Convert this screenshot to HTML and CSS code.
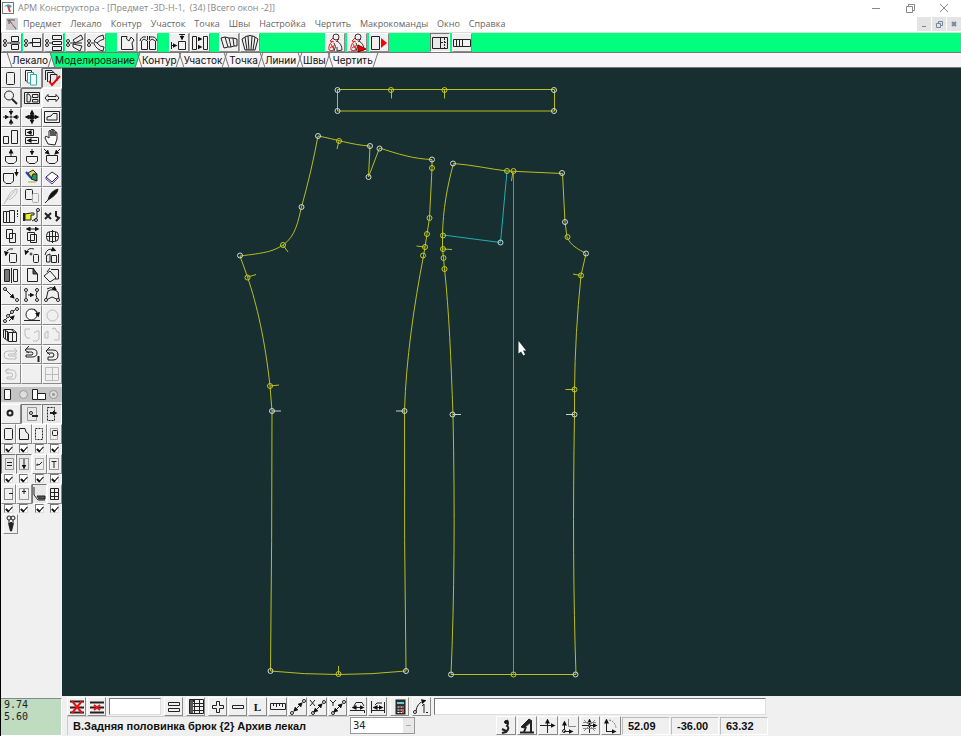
FILE: index.html
```html
<!DOCTYPE html>
<html lang="ru">
<head>
<meta charset="utf-8">
<title>АРМ Конструктора</title>
<link rel="stylesheet" href="styles.css">
</head>
<body>
<svg class="defs" aria-hidden="true">
  <defs>
    <marker id="a" viewBox="0 0 6 6" refX="3" refY="3" markerWidth="5" markerHeight="5" markerUnits="userSpaceOnUse" orient="auto-start-reverse"><path d="M0 0L6 3L0 6Z" fill="#111" stroke="none"/></marker>
    <symbol id="man" viewBox="0 0 20 20"><circle cx="11" cy="4" r="3" stroke="#333"/><path d="M8 5L5 8L9 9M14 6L11 9" stroke="#d22"/><path d="M8 8Q3 11 4 17L8 18L9 12M6 11L8 15M5 15L8 13" stroke="#d22"/><path d="M12 8Q17 11 17 17L12 18L12 14M9 10Q12 13 9 18" stroke="#333"/></symbol>
    <symbol id="mach" viewBox="0 0 20 20"><circle cx="3" cy="8" r="1.5"/><circle cx="3" cy="12" r="1.5"/><path d="M5 10H9"/></symbol>
  </defs>
</svg>
<div class="window">
  <header class="titlebar">
    <svg class="app" viewBox="0 0 12 12"><rect x=".5" y=".5" width="11" height="11" fill="#fff" stroke="#777"/><path d="M2 5Q5 0 10 4L8 6Q6 3 2 5" fill="#39a7bd" stroke="none"/><path d="M6 4L8 10" stroke="#c44" stroke-width="2"/></svg>
    <h1>АРМ Конструктора - [Предмет -3D-H-1,&nbsp; (34) [Всего окон -2]]</h1>
    <div class="wincontrols">
      <button aria-label="Свернуть"><svg viewBox="0 0 10 10"><path d="M1 5.500H9"/></svg></button>
      <button aria-label="Восстановить"><svg viewBox="0 0 10 10"><path d="M1.500 3.500H7.500V9.500H1.500ZM3.500 3V1.500H9.500V7.500H8"/></svg></button>
      <button aria-label="Закрыть"><svg viewBox="0 0 10 10"><path d="M1 1L9 9M9 1L1 9"/></svg></button>
    </div>
  </header>
  <nav class="menubar">
    <svg class="doc" viewBox="0 0 12 12"><rect width="12" height="12" fill="#ccc" stroke="none"/><path d="M1 2H9M3 2L10 11M3 2V6" stroke="#555"/><path d="M4 4L8 8" stroke="#b66"/></svg>
    <button>Предмет</button><button>Лекало</button><button>Контур</button><button>Участок</button><button>Точка</button><button>Швы</button><button>Настройка</button><button>Чертить</button><button>Макрокоманды</button><button>Окно</button><button>Справка</button>
    <div class="mdi">
      <button aria-label="Свернуть окно"><svg viewBox="0 0 10 10"><path d="M3 7.500H7"/></svg></button>
      <button aria-label="Восстановить окно"><svg viewBox="0 0 10 10"><path d="M2.500 4.500H6.500V8.500H2.500ZM4.500 4V2.500H8.500V6.500H7"/></svg></button>
      <button aria-label="Закрыть окно"><svg viewBox="0 0 10 10"><path d="M3 3L7 7M7 3L3 7" stroke-width="2"/></svg></button>
    </div>
  </nav>
  <div class="toolbar">
    <div class="group">
      <button aria-label="Шов 1"><svg viewBox="0 0 20 20"><use href="#mach"/><path d="M9.500 3.500H16.500V8.500H9.500ZM9.500 11.500H16.500V16.500H9.500Z"/><path d="M8 10H18"/></svg></button>
      <button aria-label="Шов 2"><svg viewBox="0 0 20 20"><use href="#mach"/><path d="M9.500 5.500H17.500V13.500H9.500Z"/><path d="M7 9.500H18"/></svg></button>
      <button aria-label="Шов 3"><svg viewBox="0 0 20 20"><use href="#mach"/><path d="M8.500 2.500H17.500V6.500H8.500ZM8.500 8.500H17.500V11.500H8.500ZM8.500 13.500H17.500V17.500H8.500Z"/></svg></button>
      <button aria-label="Шов 4"><svg viewBox="0 0 20 20"><use href="#mach"/><path d="M8 7L16 2L18 6L10 10ZM8 11L17 13L15 18L8 14ZM8 10H17"/></svg></button>
      <button aria-label="Шов 5"><svg viewBox="0 0 20 20"><use href="#mach"/><path d="M8 8Q11 3 17 2L18 6Q14 7 11 10ZM8 11Q11 17 17 18L18 14Q14 14 11 10"/></svg></button>
    </div>
    <div class="group g2">
      <button aria-label="Вырез"><svg viewBox="0 0 20 20"><path d="M4.500 3.500H10L9.500 6L12 8L14 4L17 7L15 10L16 16.500H4.500Z"/></svg></button>
      <button aria-label="Складки"><svg viewBox="0 0 20 20"><path d="M3.500 16.500V8L6 6L9.500 8V16.500ZM11.500 16.500V8L14 6L17.500 8V16.500ZM2 8Q3 3 8 4M19 8Q18 3 12 4"/><path d="M9.500 7V3M11.500 7V3"/></svg></button>
    </div>
    <div class="group g3">
      <button aria-label="Сдвиг"><svg viewBox="0 0 20 20"><path d="M2.500 9V16M9.500 8.500H16.500V16.500H9.500ZM10 1.500H16"/><path d="M3 12.500H6" marker-end="url(#a)"/><path d="M13 2V5" marker-end="url(#a)"/></svg></button>
      <button aria-label="Раздвижка"><svg viewBox="0 0 20 20"><path d="M2.500 3.500H6.500V16.500H2.500ZM13.500 3.500H17.500V16.500H13.500Z"/><path d="M8 6H10" marker-end="url(#a)"/><path d="M8 14H10" marker-end="url(#a)"/></svg></button>
    </div>
    <div class="group g4">
      <button aria-label="Веер"><svg viewBox="0 0 20 20"><path d="M2 5L6 4L9 14L5 15ZM6 4L10 5L12 14L9 14M10 5L14 5L15 13L12 14M14 5L18 6V13H15"/></svg></button>
      <button aria-label="Расширение"><svg viewBox="0 0 20 20"><path d="M2 6Q10 -1 18 6L15 17H5ZM5 4L7 17M8 3L9 17M12 3L11 17M15 4L13 17"/></svg></button>
    </div>
    <div class="group g5">
      <button aria-label="Манекен"><svg viewBox="0 0 20 20"><use href="#man"/></svg></button>
      <button aria-label="Манекен далее"><svg viewBox="0 0 20 20"><use href="#man"/><path d="M11 12L19 16L11 19Z" fill="#e00" stroke="#800"/></svg></button>
      <button aria-label="Вывод"><svg viewBox="0 0 20 20"><path d="M2.500 3.500H10.500V16.500H2.500Z"/><path d="M12 5L18 10L12 15Z" fill="#f00" stroke="none"/></svg></button>
    </div>
    <div class="group g6">
      <button class="down" aria-label="Раскладка"><svg viewBox="0 0 20 20"><path d="M2.500 4.500H17.500V15.500H2.500ZM10.500 5V15"/><path d="M14.500 5V15M11 9.500H17" stroke-dasharray="2 1"/></svg></button>
      <button aria-label="Линейка"><svg viewBox="0 0 20 20"><path d="M1.500 6.500H18.500V13.500H1.500ZM4.500 7V13M7.500 7V13M10.500 7V13"/></svg></button>
    </div>
  </div>
  <div class="tabs" role="tablist">
    <button role="tab">Лекало</button><button role="tab" class="active" aria-selected="true">Моделирование</button><button role="tab">Контур</button><button role="tab">Участок</button><button role="tab">Точка</button><button role="tab">Линии</button><button role="tab">Швы</button><button role="tab">Чертить</button>
  </div>
  <main class="work">
    <aside class="side">
      <div class="tools">
        <button aria-label="Деталь"><svg viewBox="0 0 20 20"><rect x="5.500" y="4.500" width="8" height="12" rx="1"/></svg></button>
        <button aria-label="Детали"><svg viewBox="0 0 20 20"><g fill="#fff"><path d="M3.500 2.500H9.500V13H3.500Z"/><path d="M5.500 4.500H11.500V15H5.500Z" stroke="#299"/><path d="M8.500 6.500H14.500V17H8.500Z" stroke="#3aa"/></g></svg></button>
        <button class="down" aria-label="Выбор"><svg viewBox="0 0 20 20"><path d="M3.500 12V2.500H10L12 5M5.500 14V4.500H12L14 7M8.500 6.500H15V13M8.500 6.500V15"/><path d="M7 13L10 17L18 8" stroke="#e00" stroke-width="2"/></svg></button>

        <button aria-label="Лупа"><svg viewBox="0 0 20 20"><circle cx="8" cy="7.500" r="4.500"/><path d="M11 11L16 16" stroke-width="2"/></svg></button>
        <button class="down" aria-label="Окно"><svg viewBox="0 0 20 20"><path d="M2.500 4.500H17.500V15.500H2.500ZM5 6V14H8L9 9L7 6ZM10.500 6.500H16V9.500H10.500ZM10.500 11.500H16V14H10.500Z"/></svg></button>
        <button aria-label="Ширина"><svg viewBox="0 0 20 20"><path d="M3 10L6 6.500V8.500H14V6.500L17 10L14 13.500V11.500H6V13.500Z"/></svg></button>

        <button aria-label="Сжать"><svg viewBox="0 0 20 20"><path d="M2 10H6" marker-end="url(#a)"/><path d="M18 10H14" marker-end="url(#a)"/><path d="M10 2V6" marker-end="url(#a)"/><path d="M10 18V14" marker-end="url(#a)"/><circle cx="10" cy="10" r="1"/></svg></button>
        <button aria-label="Переместить"><svg viewBox="0 0 20 20"><circle cx="10" cy="10" r="2.500" fill="#111"/><path d="M10 6V5" marker-end="url(#a)"/><path d="M10 14V15" marker-end="url(#a)"/><path d="M6 10H5" marker-end="url(#a)"/><path d="M14 10H15" marker-end="url(#a)"/></svg></button>
        <button aria-label="Форма"><svg viewBox="0 0 20 20"><path d="M2.500 4.500H17.500V15.500H2.500ZM5 13V10L9 9L11 6.500H15V13Z"/></svg></button>

        <button aria-label="Размер"><svg viewBox="0 0 20 20"><path d="M2.500 9.500H7.500V16.500H2.500ZM10.500 3.500H16.500V16.500H10.500Z"/></svg></button>
        <button aria-label="Строки"><svg viewBox="0 0 20 20"><path d="M3.500 2.500H11.500V8.500H3.500ZM3.500 10.500H16.500V16.500H3.500Z"/><path d="M10 5.500H7" marker-end="url(#a)"/><path d="M15 13.500H7" marker-end="url(#a)"/></svg></button>
        <button aria-label="Рука"><svg viewBox="0 0 20 20"><path d="M6 17L3 11L4 9L7 11V4Q8 3 9 4V9V3Q10 1 11 3V9V3Q12 2 13 4V9V5Q15 4 15 7V12L13 18Z" fill="#fff"/></svg></button>

        <button aria-label="Поднять"><svg viewBox="0 0 20 20"><path d="M4.500 9.500H15.500V14L13 16.500H7L4.500 14Z"/><path d="M10 9V4" marker-end="url(#a)"/></svg></button>
        <button aria-label="Опустить"><svg viewBox="0 0 20 20"><path d="M4.500 9.500H15.500V14L13 16.500H7L4.500 14Z"/><path d="M10 2V6" marker-end="url(#a)"/></svg></button>
        <button aria-label="Собрать"><svg viewBox="0 0 20 20"><path d="M4.500 8.500H15.500V14L13 16.500H7L4.500 14Z"/><path d="M2 2L6 6" marker-end="url(#a)"/><path d="M18 2L14 6" marker-end="url(#a)"/></svg></button>

        <button aria-label="Вниз"><svg viewBox="0 0 20 20"><path d="M2.500 6.500H12.500V14L10 16.500H5L2.500 14Z"/><path d="M15.500 2V7" marker-end="url(#a)"/></svg></button>
        <button aria-label="Заливка"><svg viewBox="0 0 20 20"><path d="M6 6L11 3L15 7L10 12Z" fill="#e9d84a"/><path d="M4 5L9 11" stroke="#24a" stroke-width="2"/><path d="M11 7H15V14L9 12Z" fill="#296"/><path d="M6 15H14" stroke="#aa3"/></svg></button>
        <button aria-label="Ластик"><svg viewBox="0 0 20 20"><path d="M4 10L10 5L16 9L10 15Z" fill="#fff" stroke="#224"/><path d="M4 10V12L10 17L16 11V9" stroke="#63a"/></svg></button>

        <button class="off" aria-label="Перо серое"><svg viewBox="0 0 20 20"><path d="M3 18L7 11Q10 4 16 3Q17 9 8 14M5 15L14 5"/></svg></button>
        <button aria-label="Копия"><svg viewBox="0 0 20 20"><rect x="3.500" y="3.500" width="7" height="10" rx="1"/><rect x="10.500" y="7.500" width="6" height="9" rx="1" stroke="#aaa"/></svg></button>
        <button aria-label="Перо"><svg viewBox="0 0 20 20"><path d="M6 14Q8 5 16 3Q16 8 6 14Z" fill="#111"/><path d="M3 17L8 12"/></svg></button>

        <button aria-label="Слои"><svg viewBox="0 0 20 20"><path d="M2.500 5.500H5.500V16.500H2.500ZM5.500 5.500H8.500V16.500H5.500ZM8.500 4.500H13.500V16.500H8.500Z"/><path d="M16.500 4V11" stroke-dasharray="2 1"/></svg></button>
        <button aria-label="Указать"><svg viewBox="0 0 20 20"><path d="M3 8L9 7H12V9H9V14H3Z" fill="#ee3"/><path d="M2 7V15" stroke-width="2"/><path d="M10 15L15 12V5"/><circle cx="16" cy="4" r="1.500"/><circle cx="14" cy="14" r="1.500"/></svg></button>
        <button aria-label="Точки"><svg viewBox="0 0 20 20"><path d="M3 7L9 13M9 7L3 13" stroke-width="2"/><path d="M14 5V10L17 12L14 15" stroke-width="2"/></svg></button>

        <button aria-label="Пара"><svg viewBox="0 0 20 20"><path d="M5.500 3.500H11.500V12.500H5.500ZM8.500 7.500H14.500V16.500H8.500Z"/></svg></button>
        <button aria-label="Растянуть"><svg viewBox="0 0 20 20"><path d="M6 3H15" marker-start="url(#a)" marker-end="url(#a)"/><path d="M5.500 6.500H12.500V14.500H5.500ZM8.500 8.500H14.500V16.500H8.500Z"/></svg></button>
        <button aria-label="Сетка"><svg viewBox="0 0 20 20"><rect x="4.500" y="5.500" width="12" height="10" rx="4"/><path d="M10.500 4V17M5 10.500H16M7.500 6V15M13.500 6V15"/></svg></button>

        <button aria-label="Поворот влево"><svg viewBox="0 0 20 20"><rect x="8.500" y="7.500" width="7" height="9" rx="1"/><path d="M12 3Q6 2 5 8" marker-end="url(#a)"/></svg></button>
        <button aria-label="Поворот точки"><svg viewBox="0 0 20 20"><rect x="11.500" y="8.500" width="5" height="8" rx="1"/><circle cx="9" cy="8" r="1"/><path d="M12 3Q6 1 4 7" marker-end="url(#a)"/></svg></button>
        <button aria-label="Поворот детали"><svg viewBox="0 0 20 20"><path d="M4.500 9.500L8 8V16H4.500ZM9.500 9.500H14.500V16.500H9.500ZM16.500 8V17"/><path d="M3 9Q5 1 12 4" marker-end="url(#a)"/></svg></button>

        <button aria-label="Зеркало"><svg viewBox="0 0 20 20"><path d="M3.500 4.500H8.500V16.500H3.500Z" fill="#777"/><path d="M12.500 4.500H16.500V16.500H12.500ZM10.500 3V18"/></svg></button>
        <button aria-label="Загнуть"><svg viewBox="0 0 20 20"><path d="M5.500 3.500H11L15.500 9V16.500H5.500Z"/><path d="M11 3V9H15Z" fill="#555"/></svg></button>
        <button aria-label="Наклон"><svg viewBox="0 0 20 20"><path d="M2 11L8 6L14 13L8 17Z"/><path d="M9 4.500H16.500V14H13M8 3L5 7"/></svg></button>

        <button aria-label="Отрезок"><svg viewBox="0 0 20 20"><circle cx="4" cy="4" r="1.500"/><circle cx="16" cy="15" r="1.500"/><path d="M5 5L12 12" marker-end="url(#a)"/></svg></button>
        <button aria-label="Узлы"><svg viewBox="0 0 20 20"><circle cx="4" cy="5" r="1.500"/><circle cx="4" cy="15" r="1.500"/><circle cx="15" cy="5" r="1.500"/><circle cx="15" cy="15" r="1.500"/><path d="M4 7V13M15 7L14 10L15 13"/><path d="M6 10H10" marker-end="url(#a)"/></svg></button>
        <button aria-label="Контур узлов"><svg viewBox="0 0 20 20"><path d="M4 15L6 6Q11 3 16 7L17 15L10 12Z"/><circle cx="4" cy="15" r="1.500" fill="#fff"/><circle cx="16" cy="15" r="1.500" fill="#fff"/><path d="M5 4Q9 1 13 4" marker-end="url(#a)"/></svg></button>

        <button aria-label="Кривая"><svg viewBox="0 0 20 20"><circle cx="4" cy="16" r="1.500"/><circle cx="7" cy="11" r="1.500"/><circle cx="11" cy="7" r="1.500"/><circle cx="16" cy="4" r="1.500"/><path d="M5 14L6 13M8 10L10 8M12 6L14 5"/><path d="M8 16L12 12" marker-end="url(#a)"/></svg></button>
        <button aria-label="Круг"><svg viewBox="0 0 20 20"><circle cx="9.500" cy="9.500" r="5.500" fill="#fff"/><path d="M2 15.500H18"/><path d="M12 4Q15 5 16 10" marker-end="url(#a)"/></svg></button>
        <button class="off" aria-label="Окружность"><svg viewBox="0 0 20 20"><circle cx="10.500" cy="10.500" r="5.500"/></svg></button>

        <button aria-label="Пачка"><svg viewBox="0 0 20 20"><path d="M2.500 4.500H12L15.500 7.500V16.500H7.500L2.500 12.500ZM4.500 5V14M6.500 6V15M7.500 7.500V16M7.500 7.500H15M3 4.500L7.500 7.500M10.500 5L13 7M11.500 8V16"/></svg></button>
        <button class="off" aria-label="Половины"><svg viewBox="0 0 20 20"><path d="M8 4H3V10L5 13H8M12 8L15 6H17V14L15 16H11"/></svg></button>
        <button class="off" aria-label="Части"><svg viewBox="0 0 20 20"><path d="M3 8L6 6V13H3ZM10 4L13 3L15 7H17V15H12"/></svg></button>

        <button class="off" aria-label="Вперёд"><svg viewBox="0 0 20 20"><path d="M16 7H7Q3 7 3 11T7 15H15V12H8Q6 11 8 10H16M13 4L16 7L13 10"/></svg></button>
        <button aria-label="Назад один"><svg viewBox="0 0 20 20"><path d="M4 5H10Q15 5 15 9T10 13H4V11H10Q12 9 10 8H4M7 2L3 6L7 9"/><path d="M16.500 12V18" stroke-width="2"/></svg></button>
        <button aria-label="Назад"><svg viewBox="0 0 20 20"><path d="M5 6H11Q16 6 16 11T11 16H6V13H11Q13 11 11 9H5M8 3L4 7L8 11"/></svg></button>

        <button class="off" aria-label="Отмена"><svg viewBox="0 0 20 20"><path d="M5 6H11Q15 6 15 11T11 15H6V13H11Q12 11 11 9H5M8 4L4 7L8 10"/></svg></button>
        <button aria-label="Пусто"></button>
        <button class="off" aria-label="Таблица"><svg viewBox="0 0 20 20"><path d="M3.500 3.500H16.500V16.500H3.500ZM10.500 3V17M3 10.500H17"/></svg></button>
      </div>
      <div class="modes">
        <svg viewBox="0 0 15 15"><path d="M3.500 2.500H9.500V12.500H3.500Z" fill="#fff"/></svg>
        <input type="radio" name="mode" aria-label="Одна деталь">
        <svg viewBox="0 0 15 15"><path d="M1.500 2.500H6.500V12.500H1.500ZM6.500 6.500H14.500V12.500H6.500Z" fill="#fff"/></svg>
        <input type="radio" name="mode" aria-label="Две детали" checked>
      </div>
      <div class="trio">
        <button aria-label="Узел"><svg viewBox="0 0 20 20"><circle cx="9" cy="9" r="2.500" stroke-width="2"/></svg></button>
        <button class="down" aria-label="Точка на детали"><svg viewBox="0 0 20 20"><path d="M5.500 3.500H14.500V16.500H5.500Z" stroke="#999"/><circle cx="9" cy="9" r="1.500"/><path d="M10 12H16" stroke-width="2"/></svg></button>
        <button class="down" aria-label="Выход из детали"><svg viewBox="0 0 20 20"><path d="M5.500 3.500H12.500V16.500H5.500Z" stroke-dasharray="2 1"/><path d="M8 9H13" marker-end="url(#a)" stroke-width="2"/></svg></button>
      </div>
      <div class="quad">
        <div><button aria-label="Контур детали"><svg viewBox="0 0 14 18"><rect x="2.500" y="3.500" width="8" height="11" rx="1"/></svg></button><input type="checkbox" checked aria-label="Показать контур"></div>
        <div><button aria-label="Вырез детали"><svg viewBox="0 0 14 18"><path d="M2.500 3.500H8L9 7L11.500 9V14.500H2.500Z"/></svg></button><input type="checkbox" checked aria-label="Показать вырез"></div>
        <div><button aria-label="Припуск"><svg viewBox="0 0 14 18"><path d="M3.500 3.500H10.500V14.500H3.500Z" stroke-dasharray="2 1"/></svg></button><input type="checkbox" checked aria-label="Показать припуск"></div>
        <div><button aria-label="Внутренний контур"><svg viewBox="0 0 14 18"><rect x="3.500" y="3.500" width="7" height="11" stroke="#aaa"/><rect x="5.500" y="5.500" width="5" height="5" rx="1"/></svg></button><input type="checkbox" checked aria-label="Показать внутренний контур"></div>
        <div><button class="down" aria-label="Надписи"><svg viewBox="0 0 14 18"><rect x="3.500" y="3.500" width="8" height="11" stroke="#999"/><path d="M5 7.500H10M5 10.500H10"/></svg></button><input type="checkbox" checked aria-label="Показать надписи"></div>
        <div><button class="down" aria-label="Долевая"><svg viewBox="0 0 14 18"><rect x="2.500" y="3.500" width="9" height="11" stroke="#999"/><path d="M7 4V12" marker-end="url(#a)"/></svg></button><input type="checkbox" checked aria-label="Показать долевую"></div>
        <div><button aria-label="Линии детали"><svg viewBox="0 0 14 18"><rect x="3.500" y="3.500" width="8" height="11" stroke="#aaa"/><path d="M5 11V9L7 10L10 7"/></svg></button><input type="checkbox" checked aria-label="Показать линии"></div>
        <div><button aria-label="Текст"><svg viewBox="0 0 14 18"><rect x="2.500" y="3.500" width="9" height="11" stroke="#999"/><path d="M4.500 6.500H9.500M7 6V13"/></svg></button><input type="checkbox" checked aria-label="Показать текст"></div>
        <div><button aria-label="Надсечка"><svg viewBox="0 0 14 18"><rect x="2.500" y="3.500" width="8" height="11" stroke="#888"/><path d="M7 8.500H11"/></svg></button><input type="checkbox" checked aria-label="Показать надсечки"></div>
        <div><button aria-label="Метка"><svg viewBox="0 0 14 18"><rect x="2.500" y="3.500" width="9" height="11" stroke="#999"/><path d="M5 6.500H9M7 4V9"/></svg></button><input type="checkbox" checked aria-label="Показать метки"></div>
        <div><button class="down" aria-label="Угол"><svg viewBox="0 0 14 18"><path d="M2 2V10L6 15H13" /><path d="M5 11H13V14H7Z" fill="#555"/></svg></button><input type="checkbox" checked aria-label="Показать углы"></div>
        <div><button aria-label="Ячейки"><svg viewBox="0 0 14 18"><path d="M3.500 3.500H11.500V14.500H3.500ZM7.500 3V15M3 7.500H12M3 11.500H12"/></svg></button><input type="checkbox" checked aria-label="Показать ячейки"></div>
      </div>
      <button class="pin" aria-label="Булавка"><svg viewBox="0 0 14 20"><circle cx="5" cy="4" r="2"/><circle cx="9" cy="4" r="2"/><path d="M5 6V9M9 6V9"/><path d="M5 9L7 17L9 9M7 8V17" stroke-width="2"/></svg></button>
    </aside>
    <section class="canvas">
      <svg viewBox="62 68 899 628" preserveAspectRatio="xMinYMin meet" role="img" aria-label="Лекала брюк">
        <g class="line">
          <path d="M337.500 89.500H554.500V111H337.500Z"/>
          <path d="M318 136C335 139 352 145 370 146L368.500 177L379.500 148C398 154 414 159 432 159.500V168L429.500 218L427 234L425 247L423.500 256C414 305 406 360 404.500 411Q404 540 406 671Q338 678 270.500 671Q272 540 272 411L270 386C265 340 257 305 247.500 277L240 256C264 253 272 252 283 245C296 236 298 221 301.500 207C308 184 314 158 318 136Z"/>
          <path d="M453.500 163.500C473 165 490 169 507 171L562.500 173.500L565 222L567 237C571 246 578 249 586 253.500L581 275.500C577 315 575 350 574.500 389.500V414.500Q572 560 576 674.500H451Q456 560 453 415C451 360 449 310 444.500 269L443.500 258L442.500 249V235C443 210 447 187 453.500 163.500Z"/>
          <path d="M391.500 90V98.500M444.500 90V98.500M339 141L337 149M283 245L288 252M248 277L256 274.500M270 386L279 385M425 247L416.500 246M443 249L452 249.500M581 275.500L573 274M574 389.500H565.500M338.500 674V666M513 171L511.500 181"/>
        </g>
        <path class="grain" d="M513.500 171V675M507 171L500.500 242.500L443 235"/>
        <path class="notch" d="M272 411H281M404 411H396M453 414.500H461M574 414.500H566"/>
        <g class="ypt">
          <circle cx="391" cy="90" r="2.500"/><circle cx="444.500" cy="90" r="2.500"/><circle cx="339" cy="141" r="2.500"/><circle cx="432" cy="168" r="2.500"/><circle cx="429.500" cy="218" r="2.500"/><circle cx="427" cy="234" r="2.500"/><circle cx="425" cy="247" r="2.500"/><circle cx="423" cy="255.500" r="2.500"/><circle cx="283" cy="245" r="2.500"/><circle cx="247.500" cy="277.500" r="2.500"/><circle cx="270" cy="386" r="2.500"/><circle cx="338.500" cy="674" r="2.500"/><circle cx="507" cy="171" r="2.500"/><circle cx="513.500" cy="171" r="2.500"/><circle cx="443" cy="235.500" r="2.500"/><circle cx="443" cy="249" r="2.500"/><circle cx="443.500" cy="258" r="2.500"/><circle cx="444.500" cy="269" r="2.500"/><circle cx="567.500" cy="237" r="2.500"/><circle cx="581" cy="275.500" r="2.500"/><circle cx="574.500" cy="389.500" r="2.500"/><circle cx="513.500" cy="674.500" r="2.500"/>
        </g>
        <g class="wpt">
          <circle cx="337.500" cy="90" r="2.500"/><circle cx="554" cy="90" r="2.500"/><circle cx="337.500" cy="111" r="2.500"/><circle cx="554" cy="111" r="2.500"/><circle cx="318" cy="136" r="2.500"/><circle cx="370" cy="146" r="2.500"/><circle cx="368.500" cy="177" r="2.500"/><circle cx="379.500" cy="148.500" r="2.500"/><circle cx="432" cy="159.500" r="2.500"/><circle cx="301.500" cy="207" r="2.500"/><circle cx="240" cy="255.500" r="2.500"/><circle cx="272" cy="411" r="2.500"/><circle cx="404.500" cy="411" r="2.500"/><circle cx="270.500" cy="671" r="2.500"/><circle cx="406" cy="671" r="2.500"/><circle cx="453" cy="163.500" r="2.500"/><circle cx="562" cy="173" r="2.500"/><circle cx="565" cy="222" r="2.500"/><circle cx="586" cy="253.500" r="2.500"/><circle cx="500.500" cy="242.500" r="2.500"/><circle cx="452.500" cy="414.500" r="2.500"/><circle cx="574.500" cy="414.500" r="2.500"/><circle cx="451" cy="674.500" r="2.500"/><circle cx="575.500" cy="674.500" r="2.500"/>
        </g>
        <path class="cursor" d="M518.500 341V353.500L521 351.500L523.500 355.500L525 354.500L523 350.500H526Z"/>
      </svg>
    </section>
  </main>
  <footer class="bottom">
    <output class="coords">9.74<br>5.60</output>
    <div class="panel">
      <div class="row">
        <button aria-label="Удалить"><svg viewBox="0 0 20 20"><path d="M3 4.500H17M3 10.500H17M3 15.500H17" stroke-width="2"/><path d="M5 4L15 16M15 4L5 16" stroke="#e11" stroke-width="2"/></svg></button>
        <button aria-label="Удалить линию"><svg viewBox="0 0 20 20"><path d="M3 5.500H17M3 10.500H17M3 15.500H17" stroke-width="2"/><path d="M7 8L13 13M13 8L7 13" stroke="#e11" stroke-width="2"/></svg></button>
        <input class="short" type="text" aria-label="Значение">
        <button class="eq" aria-label="Равно"><svg viewBox="0 0 20 20"><path d="M4.500 5.500H15.500V8.500H4.500ZM4.500 11.500H15.500V14.500H4.500Z"/></svg></button>
        <button class="tbl" aria-label="Таблица размеров"><svg viewBox="0 0 20 20"><path d="M3.500 2.500H17.500V16.500H3.500ZM3 6.500H18M3 9.500H18M3 13.500H18M8.500 3V17M13.500 3V17"/><path d="M4 4H8" stroke-width="2"/><path d="M5.500 3V16" stroke="#555" stroke-width="3"/></svg></button>
        <button aria-label="Плюс"><svg viewBox="0 0 20 20"><path d="M8.500 4.500H11.500V8.500H15.500V11.500H11.500V15.500H8.500V11.500H4.500V8.500H8.500Z"/></svg></button>
        <button aria-label="Минус"><svg viewBox="0 0 20 20"><path d="M4.500 8.500H15.500V11.500H4.500Z"/></svg></button>
        <button class="letter">L</button>
        <button aria-label="Линейка длины"><svg viewBox="0 0 20 20"><path d="M2.500 6.500H17.500V12.500H2.500ZM5.500 7V9M8.500 7V10M11.500 7V9M14.500 7V10"/></svg></button>
        <button aria-label="Длина"><svg viewBox="0 0 20 20"><path d="M7 13L13 7" marker-start="url(#a)" marker-end="url(#a)"/><circle cx="4" cy="16" r="1.500"/><circle cx="16" cy="4" r="1.500"/></svg></button>
        <button aria-label="Длина по X"><svg viewBox="0 0 20 20"><path d="M2 3L7 9M7 3L2 9"/><path d="M7 14L13 8" marker-start="url(#a)" marker-end="url(#a)"/><circle cx="5" cy="16" r="1.500"/><circle cx="16" cy="5" r="1.500"/></svg></button>
        <button aria-label="Длина по Y"><svg viewBox="0 0 20 20"><path d="M2 3L5 6L8 3M5 6V9"/><path d="M7 14L13 8" marker-start="url(#a)" marker-end="url(#a)"/><circle cx="5" cy="16" r="1.500"/><circle cx="16" cy="5" r="1.500"/></svg></button>
        <button aria-label="Угол наклона"><svg viewBox="0 0 20 20"><path d="M6 10.500H14" marker-start="url(#a)" marker-end="url(#a)"/><path d="M2 13.500H16.500V16M6 9L8 5.500H14L16 9"/></svg></button>
        <button aria-label="Расстояние"><svg viewBox="0 0 20 20"><path d="M7 10.500H13" marker-start="url(#a)" marker-end="url(#a)"/><path d="M3.500 4V16M16.500 5V16M4 13.500H16M7 8L9 6H14"/></svg></button>
        <button class="calc" aria-label="Калькулятор"><svg viewBox="0 0 20 20"><rect x="6" y="3" width="9" height="14" fill="#333"/><path d="M7 6H14" stroke="#6cc" stroke-width="2"/><path d="M7.500 10H14M7.500 13H14M7.500 15.500H14" stroke="#fff" stroke-dasharray="2 1"/><path d="M13 12V16" stroke="#e44" stroke-width="2"/></svg></button>
        <button aria-label="Кривая один"><svg viewBox="0 0 20 20"><circle cx="3" cy="15" r="1.500"/><path d="M4 14Q5 6 12 4" marker-end="url(#a)"/><path d="M10 9L12 7V16M14 15.500H16"/></svg></button>
        <input class="long" type="text" aria-label="Команда">
      </div>
      <div class="row">
        <span class="status">В.Задняя половинка брюк {2} Архив лекал</span>
        <select aria-label="Размер"><option>34</option></select>
        <span class="push"></span>
        <button aria-label="Вытачка"><svg viewBox="0 0 20 20"><path d="M11 4Q13 7 11 10Q14 12 10 16L6 17M6 13L10 15" stroke-width="2"/><circle cx="10" cy="6" r="1.500" fill="#111"/></svg></button>
        <button aria-label="Прибор"><svg viewBox="0 0 20 20"><path d="M4 11L12 3L15 5L7 12Z" fill="#222"/><path d="M14 5V16M9 11L7 16M3 16.500H17" stroke-width="2"/></svg></button>
        <button aria-label="Оси"><svg viewBox="0 0 20 20"><path d="M9.500 17V5" marker-end="url(#a)"/><path d="M2 9.500H15" marker-end="url(#a)"/></svg></button>
        <button aria-label="Оси узла"><svg viewBox="0 0 20 20"><path d="M5.500 14V7" marker-end="url(#a)"/><path d="M5 15.500H12" marker-end="url(#a)"/><path d="M9.500 3V10.500H17" stroke="#888"/><circle cx="5" cy="15" r="1.500"/></svg></button>
        <button aria-label="Сетка осей"><svg viewBox="0 0 20 20"><path d="M9.500 17V5" marker-end="url(#a)"/><path d="M2 9.500H15" marker-end="url(#a)"/><path d="M4 4L15 15M15 4L4 15M3 6.500H16M3 12.500H16" stroke="#888"/></svg></button>
        <button aria-label="Поворот осей"><svg viewBox="0 0 20 20"><path d="M5.500 15V5" marker-end="url(#a)"/><path d="M5 15.500H13" marker-end="url(#a)"/><path d="M8 4Q14 5 15 12" stroke="#777" stroke-dasharray="2 1"/></svg></button>
        <output>52.09</output><output>-36.00</output><output>63.32</output>
      </div>
    </div>
  </footer>
</div>
</body>
</html>
```
FILE: styles.css
```css
* { box-sizing: border-box; }
body { margin: 0; font-family: "Open Sans", "Noto Sans", sans-serif; background: #f0f0f0; color: #111; }
button { border: 0; padding: 0; margin: 0; background: none; font: inherit; color: inherit; display: grid; place-content: center; }
svg { display: block; fill: none; stroke: #222; stroke-width: 1; }
symbol { overflow: visible; }
.defs { position: absolute; width: 0; height: 0; }

.window { min-height: 100vh; display: flex; flex-direction: column; border-left: 1px solid #000; }

.titlebar { display: flex; align-items: center; height: 15px; background: #fff; padding-left: 1px; color: #888; }
.titlebar .app { width: 12px; height: 12px; }
h1 { margin: 0 0 0 4px; font-size: 9px; line-height: 14px; font-weight: 400; white-space: nowrap; }
.wincontrols { margin-left: auto; display: flex; gap: 24px; padding-right: 12px; }
.wincontrols svg { width: 10px; height: 10px; stroke: #888; }

.menubar { display: flex; align-items: center; gap: 9px; height: 18px; background: #fff; padding-left: 5px; font-size: 9px; color: #666; border-bottom: 1px solid #ddd; }
.menubar .doc { width: 12px; height: 12px; margin-right: -4px; }
.mdi { margin-left: auto; display: flex; gap: 1px; }
.mdi button { width: 14px; height: 14px; background: #e4e4e4; }
.mdi svg { width: 10px; height: 10px; stroke: #789; }

.toolbar { display: flex; height: 20px; padding-left: 1px; background: #00ff7f; border-bottom: 1px solid #777; }
.group { display: flex; gap: 1px; }
.toolbar button, .row button, .tools button, .trio button, .quad button, .pin {
  background: #f0f0f0; border: 1px solid; border-color: #fff #8a8a8a #8a8a8a #fff;
}
.window button.down { background: #e8e8e8; border-color: #777 #fff #fff #777; }
.toolbar button { width: 20px; height: 19px; }
.toolbar svg { width: 20px; height: 20px; }
.g2 { margin-left: 11px; }
.g3 { margin-left: 11px; }
.g4 { margin-left: 9px; }
.g5 { margin-left: 65px; gap: 2px; }
.g6 { margin-left: 41px; gap: 2px; }

.tabs { display: flex; height: 15px; gap: 7px; padding-left: 11px; background: #f7f5f8; border-bottom: 1px solid #777; font: 10px/13px Inter, sans-serif; }
.tabs button { position: relative; z-index: 0; white-space: nowrap; }
.tabs button::before, .tabs button::after { content: ""; position: absolute; top: 0; bottom: 0; width: 50%; z-index: -1; }
.tabs button::before { left: -3px; border-left: 1px solid #777; transform: skewX(18deg); }
.tabs button::after { right: -3px; border-right: 1px solid #777; transform: skewX(-18deg); }
.tabs .active::before, .tabs .active::after { background: #00ff7f; width: 55%; }

.work { flex: 1; display: flex; }
.side { width: 61px; flex: none; background: #f0f0f0; }
.tools { display: grid; grid-template-columns: repeat(3, minmax(0, 1fr)); grid-template-rows: repeat(16, 1fr); height: 316px; }
.tools button { min-height: 0; overflow: hidden; }
.tools svg { width: 20px; height: 20px; }
.off svg { stroke: #bbb; }
.modes { display: flex; align-items: center; height: 15px; margin-top: 3px; background: #c4c4c4; }
.modes svg { width: 15px; height: 15px; }
.modes input { appearance: none; width: 9px; height: 9px; margin: 0 3px; border: 1px solid #999; border-radius: 50%; background: #ddd; }
.modes input:checked { background: radial-gradient(#999 0 1px, #ddd 2px); }
.trio { display: grid; grid-template-columns: repeat(3, minmax(0, 1fr)); margin-top: 2px; }
.trio button { height: 20px; }
.trio svg { width: 20px; height: 20px; }
.quad { display: grid; grid-template-columns: repeat(4, minmax(0, 1fr)); }
.quad button { width: 100%; height: 20px; }
.quad svg { width: 14px; height: 18px; }
.quad input { appearance: none; display: block; width: 9px; height: 9px; margin: 0 auto 1px 3px; background: #fff; border: 1px solid #777; border-right-color: #ddd; border-bottom-color: #ddd; position: relative; }
.quad input:checked::after { content: ""; position: absolute; left: 2px; top: 0; width: 3px; height: 5px; border: solid #111; border-width: 0 1px 2px 0; transform: rotate(42deg); }
.pin { width: 15px; height: 20px; margin-left: 2px; }
.pin svg { width: 14px; height: 20px; }

.canvas { flex: 1; min-width: 0; background: #182f31; }
.canvas svg { width: 100%; }
.line { stroke: #b9bd20; }
.grain { stroke: #1cb0b6; }
.notch { stroke: #c8d0d0; }
.ypt { stroke: #c6ca1c; }
.wpt { stroke: #d0d8dc; }
.cursor { fill: #fff; stroke: none; }

.bottom { display: flex; height: 40px; background: #f0f0f0; padding-top: 1px; }
.coords { width: 61px; flex: none; margin: 1px 0 0; padding: 0 3px; background: #c0dcc0; border: 1px solid; border-color: #888 #fff #fff #888; border-left: 0; font: 10px/12px "DejaVu Sans Mono", monospace; color: #222; }
.panel { flex: 1; min-width: 0; padding-left: 5px; }
.row { display: flex; align-items: center; gap: 1px; height: 19px; }
.row button { width: 19px; height: 19px; flex: none; }
.row svg { width: 20px; height: 20px; }
.row input { height: 17px; min-width: 0; background: #fff; border: 1px solid; border-color: #777 #ddd #ddd #777; padding: 0; }
.row .short { width: 52px; margin-left: 2px; }
.row .eq { margin-left: 2px; }
.row .tbl { margin: 0 2px; }
.row .calc { margin: 0 2px; }
.row .letter { font: bold 11px/12px "Liberation Serif", serif; }
.row .long { flex: 0 1 332px; margin-left: 2px; }
.status { flex: none; width: 282px; padding-left: 5px; font: bold 11px/18px "Liberation Sans", sans-serif; white-space: nowrap; border-top: 1px solid #ccc; border-left: 1px solid #ccc; }
select { width: 65px; height: 17px; padding: 0 0 0 2px; appearance: none; border: 1px solid #999; border-radius: 0; color: #222; font: 10px/14px "DejaVu Sans", sans-serif; background: linear-gradient(#aaa, #aaa) right 3px center / 5px 1px no-repeat, linear-gradient(#e8e8e8, #e8e8e8) right / 11px 100% no-repeat, #fff; }
.push { flex: 0 1 79px; }
.row output { width: 48px; height: 18px; padding-left: 5px; border: 1px solid; border-color: #bbb #fff #fff #bbb; font: bold 11px/16px "Liberation Sans", sans-serif; }
.row + .row button { width: 20px; }
```
